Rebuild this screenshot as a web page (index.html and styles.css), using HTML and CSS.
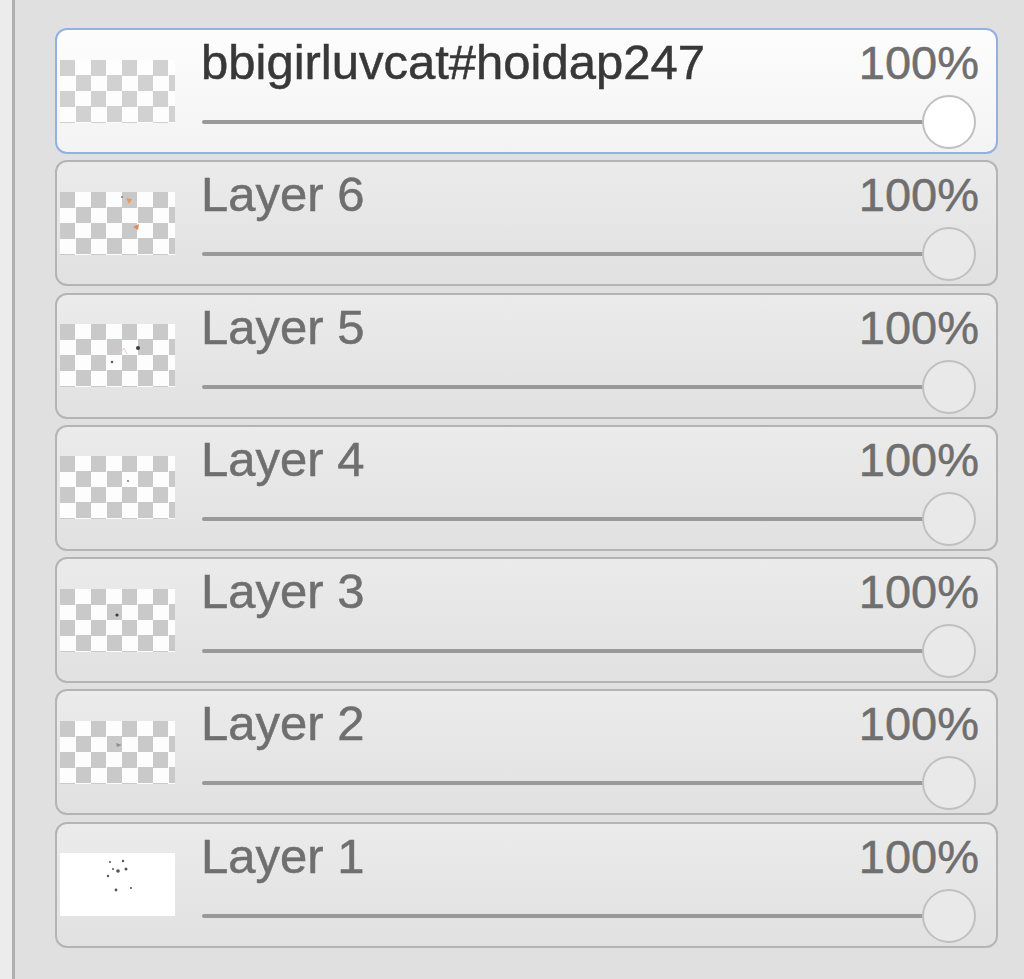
FILE: index.html
```html
<!DOCTYPE html>
<html lang="en">
<head>
    <meta charset="UTF-8">
    <title>Layers</title>
    <link rel="stylesheet" href="styles.css">
</head>
<body>
    <div class="panel">
        <div class="layer selected">
            <div class="thumb checker"></div>
            <div class="info">
                <div class="top"><span class="name">bbigirluvcat#hoidap247</span><span class="pct">100%</span></div>
                <div class="slider"><div class="track"></div><div class="knob"></div></div>
            </div>
        </div>
        <div class="layer">
            <div class="thumb checker">
                <svg viewBox="0 0 115 63"><path d="M66 6 l6 1 -3 5z" fill="#e8955a"/><circle cx="62" cy="5" r="1" fill="#777"/><path d="M73 35 l6 -3 -1 6z" fill="#e2854a"/></svg>
            </div>
            <div class="info">
                <div class="top"><span class="name">Layer 6</span><span class="pct">100%</span></div>
                <div class="slider"><div class="track"></div><div class="knob"></div></div>
            </div>
        </div>
        <div class="layer">
            <div class="thumb checker">
                <svg viewBox="0 0 115 63"><circle cx="78" cy="24" r="2" fill="#333"/><circle cx="52" cy="38" r="1.3" fill="#555"/><path d="M60 30 l4 -6 3 6" stroke="#e8c8d0" fill="none"/></svg>
            </div>
            <div class="info">
                <div class="top"><span class="name">Layer 5</span><span class="pct">100%</span></div>
                <div class="slider"><div class="track"></div><div class="knob"></div></div>
            </div>
        </div>
        <div class="layer">
            <div class="thumb checker">
                <svg viewBox="0 0 115 63"><circle cx="68" cy="25" r="0.9" fill="#666"/></svg>
            </div>
            <div class="info">
                <div class="top"><span class="name">Layer 4</span><span class="pct">100%</span></div>
                <div class="slider"><div class="track"></div><div class="knob"></div></div>
            </div>
        </div>
        <div class="layer">
            <div class="thumb checker">
                <svg viewBox="0 0 115 63"><circle cx="57" cy="26" r="1.6" fill="#333"/></svg>
            </div>
            <div class="info">
                <div class="top"><span class="name">Layer 3</span><span class="pct">100%</span></div>
                <div class="slider"><div class="track"></div><div class="knob"></div></div>
            </div>
        </div>
        <div class="layer">
            <div class="thumb checker">
                <svg viewBox="0 0 115 63"><path d="M56 22 l6 2 -5 2z" fill="#8a8aa0"/></svg>
            </div>
            <div class="info">
                <div class="top"><span class="name">Layer 2</span><span class="pct">100%</span></div>
                <div class="slider"><div class="track"></div><div class="knob"></div></div>
            </div>
        </div>
        <div class="layer">
            <div class="thumb plain">
                <svg viewBox="0 0 115 63">
                    <g fill="#555">
                        <circle cx="50" cy="9" r="1"/><circle cx="63" cy="8" r="1.2"/><circle cx="58" cy="18" r="1.8"/>
                        <circle cx="66" cy="16" r="1.5"/><circle cx="48" cy="23" r="1.2"/><circle cx="53" cy="16" r="1"/>
                        <circle cx="56" cy="37" r="1.4"/><circle cx="71" cy="35" r="1"/>
                    </g>
                </svg>
            </div>
            <div class="info">
                <div class="top"><span class="name">Layer 1</span><span class="pct">100%</span></div>
                <div class="slider"><div class="track"></div><div class="knob"></div></div>
            </div>
        </div>
    </div>
</body>
</html>
```

FILE: styles.css
```css
body {
    margin: 0;
    padding-left: 12px;
    background: #ececec;
    font-family: 'Liberation Sans', Arial, sans-serif;
    overflow: hidden;
}
.panel {
    height: 979px;
    box-sizing: border-box;
    border-left: 3px solid #b0b0b0;
    background: #e0e0e0;
    padding: 28px 26px 0 40px;
    display: flex;
    flex-direction: column;
    gap: 6.3px;
}
.layer {
    height: 126px;
    box-sizing: border-box;
    border: 2px solid #b4b4b4;
    border-radius: 12px;
    background: linear-gradient(#ebebeb, #e1e1e1);
    display: flex;
    align-items: center;
}
.layer.selected {
    border-color: #93b0e4;
    background: linear-gradient(#fdfdfd, #f3f3f3);
}
.thumb {
    width: 115px;
    height: 63px;
    margin-left: 3px;
    flex: none;
}
.thumb svg {
    display: block;
    width: 100%;
    height: 100%;
}
.checker {
    background-color: #fff;
    background-image: conic-gradient(#fff 25%, #c8c8c8 0 50%, #fff 0 75%, #c8c8c8 0);
    background-size: 31px 31px;
    opacity: 0.95;
}
.selected .checker {
    opacity: 0.8;
}
.plain {
    background: #fff;
}
.info {
    flex: 1;
    align-self: stretch;
    padding: 8px 17px 0 26px;
}
.top {
    display: flex;
    justify-content: space-between;
    align-items: baseline;
    line-height: 48px;
    color: #6f6f6f;
}
.name {
    font-size: 49px;
    -webkit-text-stroke: 0.5px #6f6f6f;
}
.pct {
    font-size: 47px;
    -webkit-text-stroke: 0.5px #6f6f6f;
}
.selected .name {
    color: #383838;
    -webkit-text-stroke: 0.5px #383838;
}
.slider {
    position: relative;
    height: 54px;
    margin-top: 8px;
}
.track {
    position: absolute;
    left: 1px;
    right: 23px;
    top: 25px;
    height: 4px;
    background: #999;
    border-radius: 2px;
}
.knob {
    position: absolute;
    right: 3px;
    top: 0;
    width: 50px;
    height: 50px;
    border: 2px solid #c0c0c0;
    border-radius: 50%;
    background: #e9e9e9;
}
.selected .knob {
    background: #fff;
}
```
